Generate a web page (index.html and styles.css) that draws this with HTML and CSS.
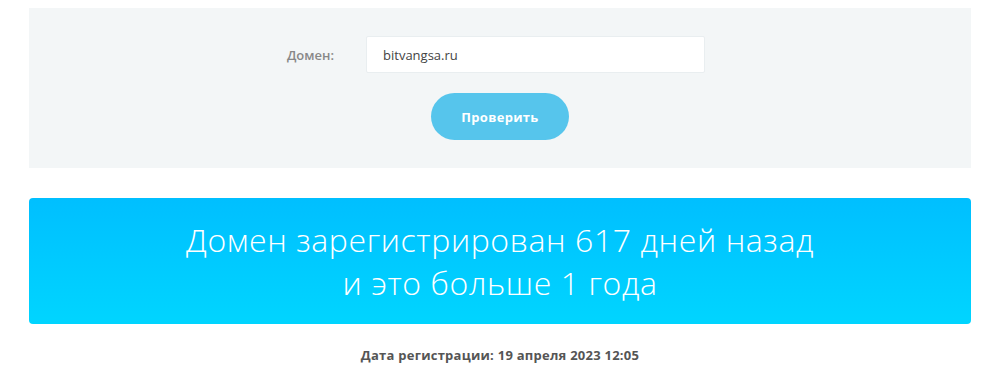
FILE: index.html
```html
<!DOCTYPE html>
<html lang="ru">
<head>
  <meta charset="UTF-8">
  <meta name="viewport" content="width=device-width, initial-scale=1.0">
  <title>Проверка возраста домена</title>
  <link rel="stylesheet" href="styles.css">
</head>
<body>
  <div class="wrap">
    <form class="check-form" onsubmit="return false">
      <div class="form-row">
        <label for="domain">Домен:</label>
        <input type="text" id="domain" value="bitvangsa.ru">
      </div>
      <button type="submit">Проверить</button>
    </form>

    <div class="result">
      Домен зарегистрирован 617 дней назад<br>
      и это больше 1 года
    </div>

    <p class="reg-date">Дата регистрации: 19 апреля 2023 12:05</p>
  </div>
</body>
</html>
```

FILE: styles.css
```css
* {
  box-sizing: border-box;
}
body {
  margin: 0;
  font-family: 'Open Sans', 'DejaVu Sans', sans-serif;
  background: #fff;
  color: #555;
}
.wrap {
  margin: 8px 27px 0 29px;
}
.check-form {
  background: #f3f6f7;
  padding: 28px 0;
  display: flex;
  flex-direction: column;
  align-items: center;
  gap: 20px;
}
.form-row {
  display: flex;
  align-items: center;
  gap: 32px;
  padding-right: 8px;
}
.form-row label {
  font-size: 13px;
  font-weight: 600;
  color: #888;
}
.form-row input {
  width: 339px;
  height: 37px;
  border: 1px solid #e9eef0;
  border-radius: 2px;
  background: #fff;
  padding: 0 16px;
  font-family: inherit;
  font-size: 13px;
  color: #444;
}
.check-form button {
  width: 138px;
  height: 47px;
  border: none;
  border-radius: 24px;
  background: #56c5ec;
  color: #fff;
  font-family: inherit;
  font-size: 13px;
  font-weight: 700;
  letter-spacing: 0.3px;
  cursor: pointer;
}
.result {
  margin-top: 30px;
  padding: 20px;
  border-radius: 4px;
  background: linear-gradient(to bottom, #00bfff, #00d5ff);
  color: #fff;
  text-align: center;
  font-size: 32px;
  font-weight: 300;
  letter-spacing: 0.6px;
  line-height: 43px;
}
.reg-date {
  margin: 22px 0 0;
  text-align: center;
  font-size: 13px;
  font-weight: 700;
  letter-spacing: 0.25px;
  color: #555;
}
```
